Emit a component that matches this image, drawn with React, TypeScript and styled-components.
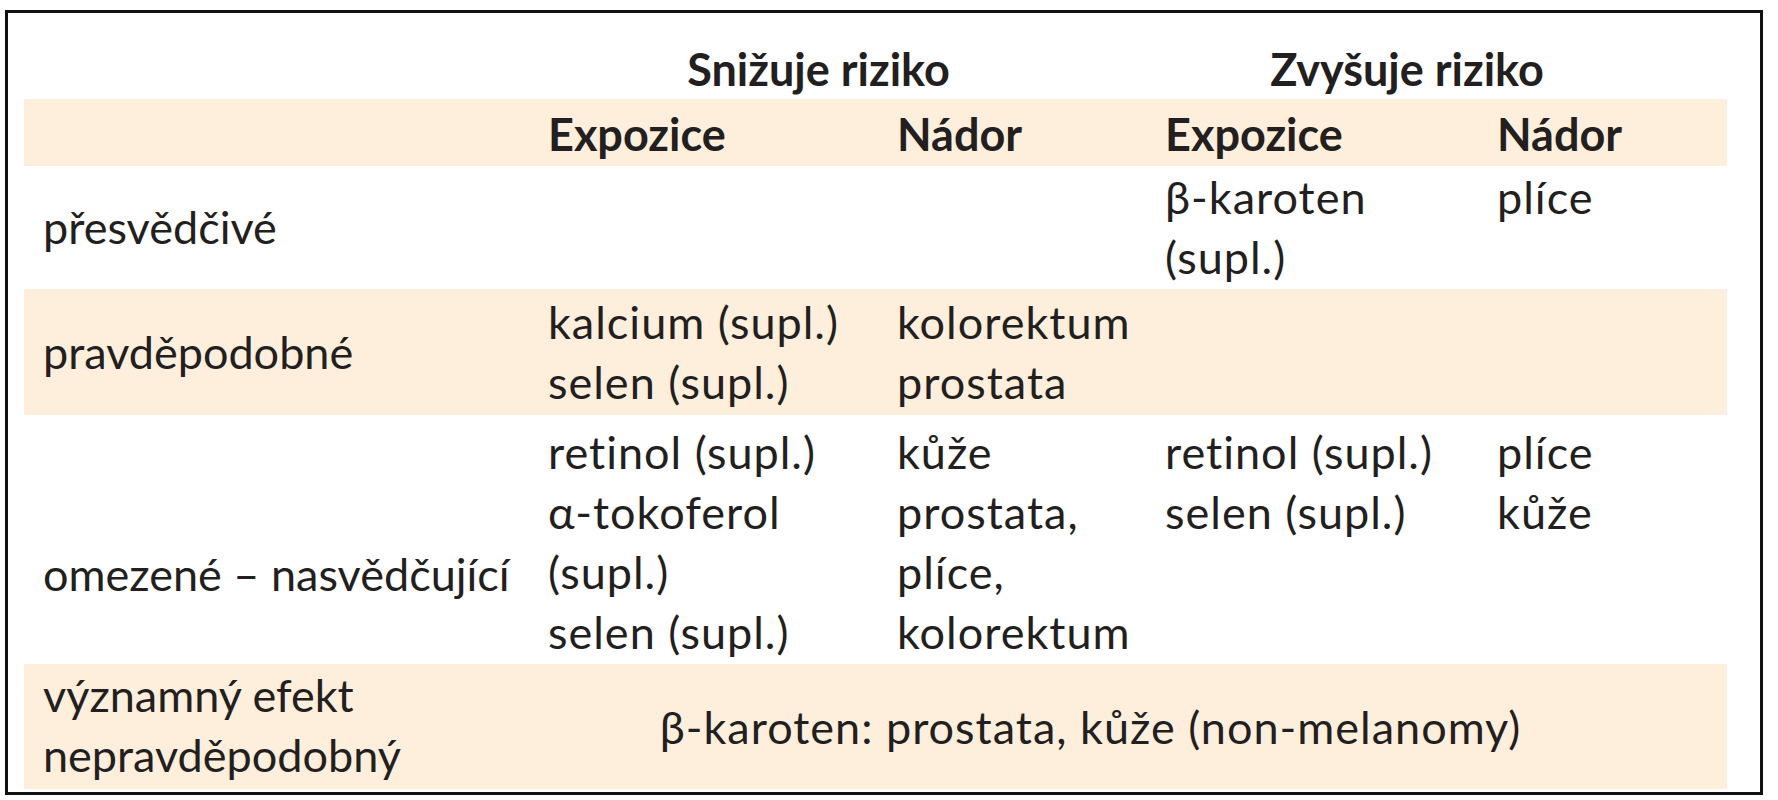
import React from 'react'
import styled, { createGlobalStyle } from 'styled-components'

const GlobalStyle = createGlobalStyle`
    html, body {
        margin: 0;
        padding: 0;
        background: #ffffff;
    }
    body {
        font-family: Lato, "Noto Sans", sans-serif;
        color: #231f20;
    }
`

interface Row {
    label: string[]
    cells: string[][]
    shaded: boolean
    labelPad: number
    pad: [number, number]
}

const rows: Row[] = [
    {
        label: ['přesvědčivé'],
        cells: [[], [], ['β-karoten', '(supl.)'], ['plíce']],
        shaded: false,
        labelPad: 0,
        pad: [1, 2]
    },
    {
        label: ['pravděpodobné'],
        cells: [['kalcium (supl.)', 'selen (supl.)'], ['kolorektum', 'prostata'], [], []],
        shaded: true,
        labelPad: 0,
        pad: [3, 3]
    },
    {
        label: ['omezené – nasvědčující'],
        cells: [
            ['retinol (supl.)', 'α-tokoferol', '(supl.)', 'selen (supl.)'],
            ['kůže', 'prostata,', 'plíce,', 'kolorektum'],
            ['retinol (supl.)', 'selen (supl.)'],
            ['plíce', 'kůže']
        ],
        shaded: false,
        labelPad: 64,
        pad: [7, 2]
    }
]

const App = () => {
    return (
        <>
            <GlobalStyle />
            <Page_>
                <Frame_>
                    <Table_>
                        <colgroup>
                            <col style={{ width: 506 }} />
                            <col style={{ width: 349 }} />
                            <col style={{ width: 268 }} />
                            <col style={{ width: 332 }} />
                            <col style={{ width: 248 }} />
                        </colgroup>
                        <tbody>
                            <tr>
                                <GroupHead_ $shift={0} />
                                <GroupHead_ colSpan={2} $shift={40}>
                                    Snižuje riziko
                                </GroupHead_>
                                <GroupHead_ colSpan={2} $shift={60}>
                                    Zvyšuje riziko
                                </GroupHead_>
                            </tr>
                            <Tr_ $shaded>
                                <ColHead_ />
                                <ColHead_>Expozice</ColHead_>
                                <ColHead_>Nádor</ColHead_>
                                <ColHead_>Expozice</ColHead_>
                                <ColHead_>Nádor</ColHead_>
                            </Tr_>
                            {rows.map((r, i) => (
                                <Tr_ key={i} $shaded={r.shaded}>
                                    <Label_ $pad={r.pad} style={{ paddingTop: r.pad[0] + r.labelPad }}>
                                        {r.label.map(l => (
                                            <Line_ key={l}>{l}</Line_>
                                        ))}
                                    </Label_>
                                    {r.cells.map((c, j) => (
                                        <Cell_ key={j} $pad={r.pad}>
                                            {c.map((l, k) => (
                                                <Line_ key={k}>{l}</Line_>
                                            ))}
                                        </Cell_>
                                    ))}
                                </Tr_>
                            ))}
                            <Tr_ $shaded>
                                <LastLabel_>
                                    <Line_>významný efekt</Line_>
                                    <Line_>nepravděpodobný</Line_>
                                </LastLabel_>
                                <Summary_ colSpan={4}>β-karoten: prostata, kůže (non-melanomy)</Summary_>
                            </Tr_>
                        </tbody>
                    </Table_>
                </Frame_>
            </Page_>
        </>
    )
}

const Page_ = styled.div`
    padding: 10px 15px 0 5px;
`

const Frame_ = styled.div`
    border: 3px solid #111111;
    padding: 0 33px 7px 16px;
    box-sizing: border-box;
    height: 785px;
`

const Table_ = styled.table`
    width: 1703px;
    table-layout: fixed;
    border-collapse: collapse;
    border-spacing: 0;
    font-size: 45px;
    line-height: 60px;
    letter-spacing: 1px;
`

const Tr_ = styled.tr<{ $shaded?: boolean }>`
    background: ${({ $shaded }) => ($shaded ? '#fdefdc' : 'transparent')};
`

const GroupHead_ = styled.td<{ $shift: number }>`
    padding: 26px ${({ $shift }) => $shift}px 0 0;
    text-align: center;
    font-weight: 700;
    letter-spacing: 0;
    white-space: nowrap;
`

const ColHead_ = styled.td`
    padding: 5px 0 2px 18px;
    font-weight: 700;
    letter-spacing: 0;
    white-space: nowrap;
`

const Cell_ = styled.td<{ $pad: [number, number] }>`
    vertical-align: top;
    padding: ${({ $pad }) => `${$pad[0]}px 0 ${$pad[1]}px 18px`};
    white-space: nowrap;
`

const Label_ = styled(Cell_)`
    vertical-align: middle;
    padding-left: 19px;
    letter-spacing: 0;
`

const LastLabel_ = styled.td`
    vertical-align: top;
    padding: 1px 0 4px 19px;
    letter-spacing: 0;
    white-space: nowrap;
`

const Summary_ = styled.td`
    text-align: center;
    vertical-align: middle;
    padding: 0 76px 0 0;
    white-space: nowrap;
`

const Line_ = styled.div`
    display: block;
`

export default App
